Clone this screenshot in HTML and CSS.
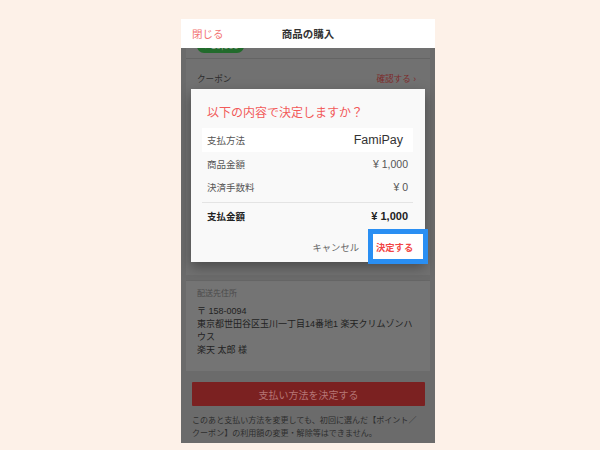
FILE: index.html
```html
<!DOCTYPE html>
<html lang="ja">

<head>
    <meta charset="UTF-8">
    <meta name="viewport" content="width=device-width, initial-scale=1.0">
    <title>商品の購入</title>
    <link rel="stylesheet" href="styles.css">
</head>

<body>
    <div class="screen">
        <!-- Top bar -->
        <div class="topbar">
            <a class="close-link" href="#">閉じる</a>
            <div class="topbar-title">商品の購入</div>
            <span></span>
        </div>

        <!-- Page content (dimmed behind the dialog) -->
        <div class="content">
            <div class="card card-top">
                <span class="badge">● 10,000</span>
            </div>

            <div class="card card-coupon">
                <div class="coupon-row">
                    <span>クーポン</span>
                    <a class="coupon-link" href="#">確認する ›</a>
                </div>
            </div>

            <div class="card card-address">
                <div class="address-label">配送先住所</div>
                <div class="address-text">〒 158-0094<br>東京都世田谷区玉川一丁目14番地1 楽天クリムゾンハウス<br>楽天 太郎 様</div>
            </div>

            <button class="submit-button">支払い方法を決定する</button>

            <p class="note">このあと支払い方法を変更しても、初回に選んだ【ポイント／クーポン】の利用額の変更・解除等はできません。</p>
        </div>

        <!-- Confirm dialog -->
        <div class="dialog">
            <h2 class="dialog-title">以下の内容で決定しますか？</h2>
            <div class="dialog-row row-method">
                <span>支払方法</span>
                <span class="method-name">FamiPay</span>
            </div>
            <div class="dialog-row">
                <span>商品金額</span>
                <span class="price">¥ 1,000</span>
            </div>
            <div class="dialog-row">
                <span>決済手数料</span>
                <span class="price">¥ 0</span>
            </div>
            <div class="dialog-row row-total">
                <span>支払金額</span>
                <span class="total-price">¥ 1,000</span>
            </div>
            <div class="dialog-actions">
                <button class="cancel-button">キャンセル</button>
                <button class="confirm-button">決定する</button>
            </div>
        </div>
    </div>
</body>

</html>
```

FILE: styles.css
```css
body {
    margin: 0;
    padding: 0;
    background-color: #fdf1e8; /* peach page background */
    font-family: "Liberation Sans", "Noto Sans CJK JP", sans-serif;
}

.screen {
    position: relative;
    width: 254px;
    height: 424px;
    margin: 19px 0 0 181px;
    background-color: #6b6b6b;
    overflow: hidden;
}

/* Top bar */
.topbar {
    display: grid;
    grid-template-columns: 1fr auto 1fr;
    align-items: center;
    height: 29px;
    padding: 0 11px;
    background-color: white;
}

.close-link {
    color: #f27272;
    font-size: 10.5px;
    text-decoration: none;
}

.topbar-title {
    color: #333;
    font-size: 10.5px;
    font-weight: bold;
}

/* Dimmed page content */
.content {
    height: 395px;
    padding: 0 5px;
    overflow: hidden;
}

.card {
    background-color: #717171;
}

.card-top {
    height: 10px;
    padding-left: 11px;
    border-bottom: 1px solid #646464;
}

.badge {
    display: inline-block;
    margin-top: -9px;
    padding: 0 6px;
    height: 14px;
    line-height: 14px;
    border-radius: 7px;
    background-color: #226b2c;
    color: #9aa89c;
    font-size: 9px;
    vertical-align: top;
}

.card-coupon {
    height: 216px;
}

.coupon-row {
    display: flex;
    justify-content: space-between;
    align-items: center;
    height: 38px;
    padding: 0 14px 0 11px;
    color: #2c2c2c;
    font-size: 8.6px;
}

.coupon-link {
    color: #7d2b2b;
    text-decoration: none;
}

.card-address {
    margin-top: 5px;
    height: 70px;
    padding: 7px 11px 13px;
    background-color: #747474;
    border-top: 1px solid #666;
}

.address-label {
    color: #4b4b4b;
    font-size: 8px;
    line-height: 12px;
}

.address-text {
    margin-top: 5px;
    color: #222;
    font-size: 9px;
    line-height: 13px;
}

.submit-button {
    display: block;
    width: 233px;
    height: 24px;
    margin: 11px 0 0 6px;
    border: none;
    border-radius: 1px;
    background-color: #7b2121;
    color: #b57575;
    font-family: inherit;
    font-size: 10px;
}

.note {
    width: 228px;
    margin: 8px 0 0 6px;
    color: #2e2e2e;
    font-size: 8.05px;
    line-height: 13px;
}

/* Confirm dialog */
.dialog {
    position: absolute;
    left: 10px;
    top: 70px;
    width: 234px;
    height: 173px;
    box-sizing: border-box;
    padding-top: 16px;
    background-color: #f9f9f9;
    box-shadow: 0 5px 12px rgba(0, 0, 0, 0.35);
}

.dialog-title {
    margin: 0 0 7px 16px;
    color: #f25a5a;
    font-size: 12px;
    font-weight: normal;
    line-height: 16px;
}

.dialog-row {
    display: flex;
    justify-content: space-between;
    align-items: center;
    height: 23px;
    margin: 0 12px 0 11px;
    padding: 0 5px;
    color: #555;
    font-size: 9.5px;
}

.price {
    font-size: 10.5px;
}

.row-method {
    height: 24px;
    background-color: white;
}

.method-name {
    margin-right: 5px;
    color: #333;
    font-size: 12.5px;
}

.row-total {
    height: 25px;
    margin-top: 4px;
    border-top: 1px solid #e4e4e4;
    color: #222;
    font-weight: bold;
}

.total-price {
    font-size: 11px;
}

.dialog-actions {
    display: flex;
    justify-content: flex-end;
    align-items: center;
    gap: 14px;
    margin-top: 6px;
    padding-right: 2px;
}

.dialog-actions button {
    border: none;
    background: none;
    padding: 0;
    font-family: inherit;
    font-size: 9.3px;
    cursor: pointer;
}

.cancel-button {
    color: #666;
}

.confirm-button {
    width: 50px;
    height: 25px;
    padding-left: 3px !important;
    text-align: left;
    color: #f24646;
    font-weight: bold;
    background-color: white !important;
    outline: 5px solid #2a8ff3;
}
```
